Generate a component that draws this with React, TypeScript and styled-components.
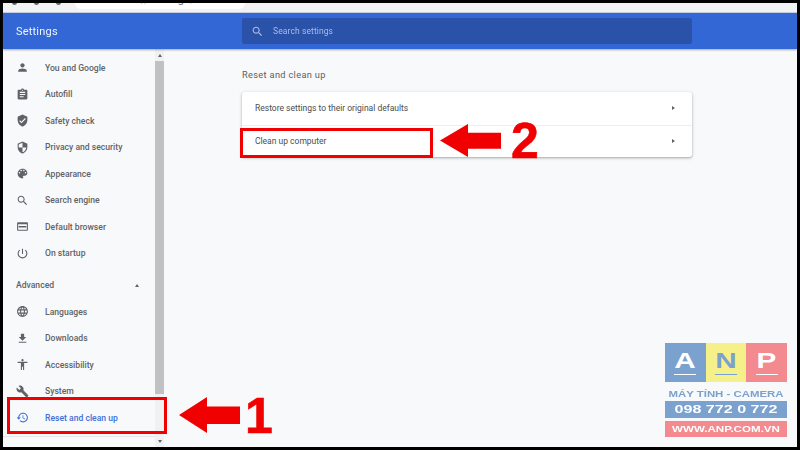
import styled, { createGlobalStyle } from "styled-components";

const GlobalStyle = createGlobalStyle`
  html, body {
    margin: 0;
    padding: 0;
    width: 800px;
    height: 450px;
    overflow: hidden;
    background: #000;
    font-family: Roboto, "Liberation Sans", sans-serif;
  }
`;

const paths = {
  person: "M12 12c2.21 0 4-1.79 4-4s-1.79-4-4-4-4 1.79-4 4 1.79 4 4 4zm0 2c-2.67 0-8 1.34-8 4v2h16v-2c0-2.66-5.33-4-8-4z",
  autofill: "M19 3h-4.18C14.4 1.84 13.3 1 12 1c-1.3 0-2.4.84-2.82 2H5c-1.1 0-2 .9-2 2v14c0 1.1.9 2 2 2h14c1.1 0 2-.9 2-2V5c0-1.1-.9-2-2-2zm-7 0c.55 0 1 .45 1 1s-.45 1-1 1-1-.45-1-1 .45-1 1-1zm2 14H7v-2h7v2zm3-4H7v-2h10v2zm0-4H7V7h10v2z",
  safety: "M12 1L3 5v6c0 5.55 3.84 10.74 9 12 5.16-1.26 9-6.45 9-12V5l-9-4zm-2 16l-4-4 1.41-1.41L10 14.17l6.59-6.59L18 9l-8 8z",
  security: "M12 1L3 5v6c0 5.55 3.84 10.74 9 12 5.16-1.26 9-6.45 9-12V5l-9-4zm0 10.99h7c-.53 4.12-3.28 7.79-7 8.94V12H5V6.3l7-3.11v8.8z",
  palette: "M12 3c-4.97 0-9 4.03-9 9s4.03 9 9 9c.83 0 1.5-.67 1.5-1.5 0-.39-.15-.74-.39-1.01-.23-.26-.38-.61-.38-.99 0-.83.67-1.5 1.5-1.5H16c2.76 0 5-2.24 5-5 0-4.42-4.03-8-9-8zm-5.5 9c-.83 0-1.5-.67-1.5-1.5S5.67 9 6.5 9 8 9.67 8 10.5 7.33 12 6.5 12zm3-4C8.67 8 8 7.33 8 6.5S8.67 5 9.5 5s1.5.67 1.5 1.5S10.33 8 9.5 8zm5 0c-.83 0-1.5-.67-1.5-1.5S13.67 5 14.5 5s1.5.67 1.5 1.5S15.33 8 14.5 8zm3 4c-.83 0-1.5-.67-1.5-1.5S16.67 9 17.5 9s1.5.67 1.5 1.5-.67 1.5-1.5 1.5z",
  search: "M15.5 14h-.79l-.28-.27C15.41 12.59 16 11.11 16 9.5 16 5.91 13.09 3 9.5 3S3 5.91 3 9.5 5.91 16 9.5 16c1.61 0 3.09-.59 4.23-1.57l.27.28v.79l5 4.99L20.49 19l-4.99-5zm-6 0C7.01 14 5 11.99 5 9.5S7.01 5 9.5 5 14 7.01 14 9.5 11.99 14 9.5 14z",
  browser: "M20 4H4c-1.1 0-2 .9-2 2v12c0 1.1.9 2 2 2h16c1.1 0 2-.9 2-2V6c0-1.1-.9-2-2-2zm0 14H4V8h16v10zM5 11h14v3H5z",
  power: "M13 3h-2v10h2V3zm4.83 2.17l-1.42 1.42C17.99 7.86 19 9.81 19 12c0 3.87-3.13 7-7 7s-7-3.13-7-7c0-2.19 1.01-4.14 2.58-5.42L6.17 5.17C4.23 6.82 3 9.26 3 12c0 4.97 4.03 9 9 9s9-4.03 9-9c0-2.74-1.23-5.18-3.17-6.83z",
  language: "M11.99 2C6.47 2 2 6.48 2 12s4.47 10 9.99 10C17.52 22 22 17.52 22 12S17.52 2 11.99 2zm6.93 6h-2.95c-.32-1.25-.78-2.45-1.38-3.56 1.84.63 3.37 1.91 4.33 3.56zM12 4.04c.83 1.2 1.48 2.53 1.91 3.96h-3.82c.43-1.43 1.08-2.76 1.91-3.96zM4.26 14C4.1 13.36 4 12.69 4 12s.1-1.36.26-2h3.38c-.08.66-.14 1.32-.14 2 0 .68.06 1.34.14 2H4.26zm.82 2h2.95c.32 1.25.78 2.45 1.38 3.56-1.84-.63-3.37-1.9-4.33-3.56zm2.95-8H5.08c.96-1.66 2.49-2.93 4.33-3.56C8.81 5.55 8.35 6.75 8.03 8zM12 19.96c-.83-1.2-1.48-2.53-1.91-3.96h3.82c-.43 1.43-1.08 2.76-1.91 3.96zM14.34 14H9.66c-.09-.66-.16-1.32-.16-2 0-.68.07-1.35.16-2h4.68c.09.65.16 1.32.16 2 0 .68-.07 1.34-.16 2zm.25 5.56c.6-1.11 1.06-2.31 1.38-3.56h2.95c-.96 1.65-2.49 2.93-4.33 3.56zM16.36 14c.08-.66.14-1.32.14-2 0-.68-.06-1.34-.14-2h3.38c.16.64.26 1.31.26 2s-.1 1.36-.26 2h-3.38z",
  download: "M19 9h-4V3H9v6H5l7 7 7-7zM5 18v2h14v-2H5z",
  accessibility: "M12 2c1.1 0 2 .9 2 2s-.9 2-2 2-2-.9-2-2 .9-2 2-2zm9 7h-6v13h-2v-6h-2v6H9V9H3V7h18v2z",
  build: "M22.7 19l-9.1-9.1c.9-2.3.4-5-1.5-6.9-2-2-5-2.4-7.4-1.3L9 6 6 9 1.6 4.7C.4 7.1.9 10.1 2.9 12.1c1.9 1.9 4.6 2.4 6.9 1.5l9.1 9.1c.4.4 1 .4 1.4 0l2.3-2.3c.5-.4.5-1.1.1-1.4z",
  restore: "M13 3c-4.97 0-9 4.03-9 9H1l3.89 3.89.07.14L9 12H6c0-3.87 3.13-7 7-7s7 3.13 7 7-3.13 7-7 7c-1.93 0-3.68-.79-4.94-2.06l-1.42 1.42C8.27 19.99 10.51 21 13 21c4.97 0 9-4.03 9-9s-4.03-9-9-9zm-1 5v5l4.28 2.54.72-1.21-3.5-2.08V8H12z",
};

type IconName = keyof typeof paths;

const mainItems: { icon: IconName; label: string }[] = [
  { icon: "person", label: "You and Google" },
  { icon: "autofill", label: "Autofill" },
  { icon: "safety", label: "Safety check" },
  { icon: "security", label: "Privacy and security" },
  { icon: "palette", label: "Appearance" },
  { icon: "search", label: "Search engine" },
  { icon: "browser", label: "Default browser" },
  { icon: "power", label: "On startup" },
];

const advancedItems: { icon: IconName; label: string; active?: boolean }[] = [
  { icon: "language", label: "Languages" },
  { icon: "download", label: "Downloads" },
  { icon: "accessibility", label: "Accessibility" },
  { icon: "build", label: "System" },
  { icon: "restore", label: "Reset and clean up", active: true },
];

const Frame = styled.div`
  position: relative;
  width: 800px;
  height: 450px;
  box-sizing: border-box;
  padding: 3px;
  background: #000;
  overflow: hidden;
`;

const Screen = styled.div`
  height: 444px;
  display: flex;
  flex-direction: column;
  background: #f8f9fa;
  filter: blur(0.4px);
`;

const BrowserStrip = styled.div`
  height: 10px;
  box-sizing: border-box;
  flex: none;
  display: flex;
  align-items: flex-start;
  gap: 17px;
  padding-left: 9px;
  background: #f1f2f4;
  border-bottom: 1px solid #c9d3e6;
  overflow: hidden;
`;

const AddressBar = styled.div`
  margin-left: -3px;
  width: 170px;
  height: 6px;
  flex: none;
  box-sizing: border-box;
  padding-left: 24px;
  border-radius: 0 0 6px 6px;
  background: #fff;
  color: #6b6f74;
  font-size: 11.5px;
  line-height: 14px;
  white-space: nowrap;
  overflow: hidden;
`;

const AddressText = styled.div`
  margin-top: -11px;
`;

const StripDot = styled.span`
  width: 5px;
  height: 5px;
  flex: none;
  margin-top: -3px;
  border-radius: 50%;
  background: #5f6368;
`;

const Header = styled.header`
  height: 36px;
  flex: none;
  display: flex;
  align-items: center;
  background: #3367d6;
  box-shadow: 0 1px 2px rgba(60, 64, 67, 0.45);
  position: relative;
  z-index: 1;
`;

const Title = styled.div`
  width: 239px;
  flex: none;
  padding-left: 13px;
  box-sizing: border-box;
  color: #eef3fd;
  font-size: 11px;
  font-weight: 400;
  letter-spacing: 0.2px;
`;

const SearchBox = styled.div`
  width: 450px;
  height: 26px;
  display: flex;
  align-items: center;
  gap: 9px;
  padding-left: 9px;
  box-sizing: border-box;
  border-radius: 2px;
  background: #2a52a9;
  color: #a9bce6;
  font-size: 8.5px;
  letter-spacing: 0.1px;
`;

const Body = styled.div`
  flex: 1;
  min-height: 0;
  display: flex;
`;

const Sidebar = styled.nav`
  width: 152px;
  flex: none;
  box-sizing: border-box;
  padding-top: 5.5px;
  background: #f8f9fa;
`;

const Row = styled.div<{ $active?: boolean }>`
  height: 26.5px;
  display: flex;
  align-items: center;
  padding-left: 13px;
  color: ${(p) => (p.$active ? "#3f6fd8" : "#5f6368")};
  font-size: 8.6px;
  font-weight: 500;
  white-space: nowrap;
`;

const RowIcon = styled.svg<{ $active?: boolean }>`
  width: 13px;
  height: 13px;
  flex: none;
  margin-right: 16px;
  fill: ${(p) => (p.$active ? "#3f6fd8" : "#5f6368")};
`;

const AdvancedRow = styled.div`
  height: 26.5px;
  margin-top: 5.5px;
  display: flex;
  align-items: center;
  justify-content: space-between;
  padding: 0 16px 0 13px;
  color: #5f6368;
  font-size: 8.6px;
  font-weight: 500;
`;

const SidebarFoot = styled.div`
  margin-top: 4.5px;
  border-top: 1px solid #e4e6e8;
`;

const Caret = styled.span<{ $dir: "up" | "down" | "right" }>`
  width: 0;
  height: 0;
  flex: none;
  ${(p) =>
    p.$dir === "right"
      ? `border-top: 2.5px solid transparent;
         border-bottom: 2.5px solid transparent;
         border-left: 3px solid #5f6368;`
      : `border-left: 2.5px solid transparent;
         border-right: 2.5px solid transparent;
         border-${p.$dir === "up" ? "bottom" : "top"}: 3px solid #5f6368;`}
`;

const Scrollbar = styled.div`
  width: 9px;
  flex: none;
  display: flex;
  flex-direction: column;
  align-items: center;
  background: #f1f1f1;
`;

const ScrollButton = styled.div`
  height: 12px;
  flex: none;
  display: flex;
  align-items: center;
  justify-content: center;
`;

const ScrollThumb = styled.div`
  width: 100%;
  height: 333px;
  flex: none;
  background: #c1c1c1;
`;

const ScrollGap = styled.div`
  flex: 1;
`;

const Main = styled.main`
  flex: 1;
  padding: 19px 0 0 78px;
`;

const SectionTitle = styled.h2`
  margin: 0 0 11px;
  height: 13px;
  line-height: 13px;
  color: #5a5e63;
  font-size: 9.2px;
  font-weight: 400;
  letter-spacing: 0.35px;
`;

const Card = styled.section`
  width: 450px;
  border-radius: 3px;
  background: #fff;
  box-shadow: 0 1px 2px rgba(60, 64, 67, 0.3), 0 1px 3px 1px rgba(60, 64, 67, 0.12);
`;

const CardRow = styled.div<{ $divided?: boolean }>`
  height: 32.5px;
  box-sizing: border-box;
  display: flex;
  align-items: center;
  justify-content: space-between;
  padding: 0 17px 0 13px;
  color: #4a4d51;
  font-size: 8.5px;
  ${(p) => (p.$divided ? "border-top: 1px solid #eceef0;" : "")}
`;

const RedBox = styled.div<{ $x: number; $y: number; $w: number; $h: number }>`
  position: absolute;
  left: ${(p) => p.$x}px;
  top: ${(p) => p.$y}px;
  width: ${(p) => p.$w}px;
  height: ${(p) => p.$h}px;
  box-sizing: border-box;
  border: 3px solid #f00000;
`;

const Arrow = styled.svg<{ $x: number; $y: number; $h: number }>`
  position: absolute;
  left: ${(p) => p.$x}px;
  top: ${(p) => p.$y}px;
  width: 61px;
  height: ${(p) => p.$h}px;
  fill: #f00000;
`;

const Numeral = styled.div<{ $x: number; $y: number }>`
  position: absolute;
  left: ${(p) => p.$x}px;
  top: ${(p) => p.$y}px;
  color: #f00000;
  font-family: "Liberation Sans", Arial, sans-serif;
  font-size: 50px;
  font-weight: 700;
  line-height: 50px;
  -webkit-text-stroke: 0.6px #f00000;
`;

const Logo = styled.div`
  position: absolute;
  left: 665px;
  top: 343px;
  width: 122px;
  display: flex;
  flex-direction: column;
  font-family: "Liberation Sans", sans-serif;
  font-weight: 700;
  filter: blur(0.4px);
`;

const LogoTiles = styled.div`
  display: grid;
  grid-template-columns: repeat(3, 1fr);
  height: 39px;
`;

const LogoTile = styled.div<{ $bg: string; $ink: string }>`
  display: flex;
  flex-direction: column;
  align-items: center;
  padding-top: 8px;
  box-sizing: border-box;
  background: ${(p) => p.$bg};
  color: ${(p) => p.$ink};
  font-size: 22px;
  line-height: 20px;

  &::after {
    content: "";
    width: 22px;
    height: 1px;
    margin-top: 3px;
    background: ${(p) => p.$ink};
  }
`;

const LogoLetter = styled.span`
  display: block;
  transform: scaleX(1.35);
`;

const LogoLine = styled.span<{ $sx: number }>`
  display: block;
  transform: scaleX(${(p) => p.$sx});
`;

const LogoTagline = styled.div`
  height: 19px;
  line-height: 23px;
  color: #7ba1cf;
  font-size: 9.5px;
  text-align: center;
  white-space: nowrap;
`;

const LogoPhone = styled.div`
  height: 17px;
  line-height: 17px;
  background: #7ba1cf;
  color: #fff;
  font-size: 11.5px;
  text-align: center;
  white-space: nowrap;
`;

const LogoSite = styled.div`
  height: 16px;
  margin-top: 3px;
  line-height: 16px;
  background: #f28a90;
  color: #fff;
  font-size: 9.5px;
  text-align: center;
  white-space: nowrap;
`;

const Icon = ({ name, active }: { name: IconName; active?: boolean }) => (
  <RowIcon viewBox="0 0 24 24" $active={active}>
    <path d={paths[name]} />
  </RowIcon>
);

const arrowPath = "M0 18 L28 0 V9.5 H61 V27 H28 V36 Z";

export default function App() {
  return (
    <>
      <GlobalStyle />
      <Frame>
        <Screen>
          <BrowserStrip>
            <StripDot />
            <StripDot />
            <StripDot />
            <AddressBar>
              <AddressText>chrome://settings/reset</AddressText>
            </AddressBar>
          </BrowserStrip>
          <Header>
            <Title>Settings</Title>
            <SearchBox>
              <svg width="13" height="13" viewBox="0 0 24 24" fill="#a9bce6">
                <path d={paths.search} />
              </svg>
              Search settings
            </SearchBox>
          </Header>
          <Body>
            <Sidebar>
              {mainItems.map((item) => (
                <Row key={item.label}>
                  <Icon name={item.icon} />
                  {item.label}
                </Row>
              ))}
              <AdvancedRow>
                Advanced
                <Caret $dir="up" />
              </AdvancedRow>
              {advancedItems.map((item) => (
                <Row key={item.label} $active={item.active}>
                  <Icon name={item.icon} active={item.active} />
                  {item.label}
                </Row>
              ))}
              <SidebarFoot />
            </Sidebar>
            <Scrollbar>
              <ScrollButton>
                <Caret $dir="up" />
              </ScrollButton>
              <ScrollThumb />
              <ScrollGap />
              <ScrollButton>
                <Caret $dir="down" />
              </ScrollButton>
            </Scrollbar>
            <Main>
              <SectionTitle>Reset and clean up</SectionTitle>
              <Card>
                <CardRow>
                  Restore settings to their original defaults
                  <Caret $dir="right" />
                </CardRow>
                <CardRow $divided>
                  Clean up computer
                  <Caret $dir="right" />
                </CardRow>
              </Card>
            </Main>
          </Body>
        </Screen>

        <RedBox $x={7} $y={397} $w={160} $h={37} />
        <Arrow $x={179} $y={397} $h={36} viewBox="0 0 61 36" preserveAspectRatio="none">
          <path d={arrowPath} />
        </Arrow>
        <Numeral $x={245} $y={391}>1</Numeral>

        <RedBox $x={240} $y={128} $w={193} $h={30} />
        <Arrow $x={440} $y={124} $h={33} viewBox="0 0 61 36" preserveAspectRatio="none">
          <path d={arrowPath} />
        </Arrow>
        <Numeral $x={511} $y={116}>2</Numeral>

        <Logo>
          <LogoTiles>
            <LogoTile $bg="#7ba1cf" $ink="#fff"><LogoLetter>A</LogoLetter></LogoTile>
            <LogoTile $bg="#f6f08a" $ink="#7ba1cf"><LogoLetter>N</LogoLetter></LogoTile>
            <LogoTile $bg="#f28a90" $ink="#fff"><LogoLetter>P</LogoLetter></LogoTile>
          </LogoTiles>
          <LogoTagline><LogoLine $sx={1.2}>MÁY TÍNH -  CAMERA</LogoLine></LogoTagline>
          <LogoPhone><LogoLine $sx={1.4}>098 772 0 772</LogoLine></LogoPhone>
          <LogoSite><LogoLine $sx={1.22}>WWW.ANP.COM.VN</LogoLine></LogoSite>
        </Logo>
      </Frame>
    </>
  );
}
